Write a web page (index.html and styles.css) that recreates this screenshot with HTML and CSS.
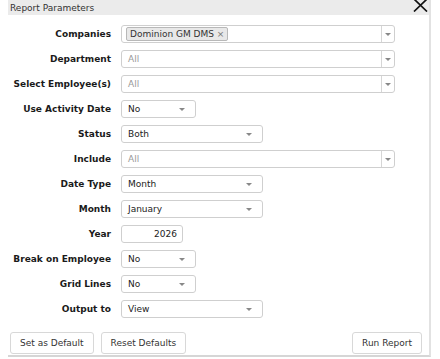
FILE: index.html
```html
<!DOCTYPE html>
<html lang="en">
<head>
    <meta charset="UTF-8">
    <title>Report Parameters</title>
    <link rel="stylesheet" href="styles.css">
</head>
<body>
    <div class="dialog">
        <div class="header">
            <span>Report Parameters</span>
            <svg class="close" width="15" height="13" viewBox="0 0 15 13">
                <path d="M1 0 L14 12.5 M14 0 L1 12.5" stroke="#111" stroke-width="1.7" fill="none"/>
            </svg>
        </div>

        <div class="form">
            <div class="row">
                <label>Companies</label>
                <div class="field wide multi">
                    <span class="tag">Dominion GM DMS <b>&times;</b></span>
                    <span class="arrow-box"><i class="arrow"></i></span>
                </div>
            </div>
            <div class="row">
                <label>Department</label>
                <div class="field wide multi">
                    <span class="placeholder">All</span>
                    <span class="arrow-box"><i class="arrow"></i></span>
                </div>
            </div>
            <div class="row">
                <label>Select Employee(s)</label>
                <div class="field wide multi">
                    <span class="placeholder">All</span>
                    <span class="arrow-box"><i class="arrow"></i></span>
                </div>
            </div>
            <div class="row">
                <label>Use Activity Date</label>
                <div class="field short"><span>No</span><i class="arrow"></i></div>
            </div>
            <div class="row">
                <label>Status</label>
                <div class="field medium"><span>Both</span><i class="arrow"></i></div>
            </div>
            <div class="row">
                <label>Include</label>
                <div class="field wide multi">
                    <span class="placeholder">All</span>
                    <span class="arrow-box"><i class="arrow"></i></span>
                </div>
            </div>
            <div class="row">
                <label>Date Type</label>
                <div class="field medium"><span>Month</span><i class="arrow"></i></div>
            </div>
            <div class="row">
                <label>Month</label>
                <div class="field medium"><span>January</span><i class="arrow"></i></div>
            </div>
            <div class="row">
                <label>Year</label>
                <div class="field year">2026</div>
            </div>
            <div class="row">
                <label>Break on Employee</label>
                <div class="field short"><span>No</span><i class="arrow"></i></div>
            </div>
            <div class="row">
                <label>Grid Lines</label>
                <div class="field short"><span>No</span><i class="arrow"></i></div>
            </div>
            <div class="row">
                <label>Output to</label>
                <div class="field medium"><span>View</span><i class="arrow"></i></div>
            </div>
        </div>

        <div class="footer">
            <button>Set as Default</button>
            <button>Reset Defaults</button>
            <button class="run">Run Report</button>
        </div>
    </div>
</body>
</html>
```

FILE: styles.css
```css
body {
    margin: 0;
    background: #fff;
    font-family: "DejaVu Sans", Verdana, sans-serif;
    font-size: 9px;
    color: #222;
}
.dialog {
    margin-left: 8px;
    width: 421px;
    border-right: 2px solid #e2e2e2;
    border-bottom: 2px solid #d6d6d6;
    padding-bottom: 1px;
}
.header {
    height: 15px;
    background: #ebebeb;
    display: flex;
    justify-content: space-between;
    align-items: center;
    padding: 0 1px 0 2px;
    color: #333;
}
.close {
    align-self: flex-start;
    margin-top: -1px;
}
.form {
    padding-top: 10px;
}
.row {
    display: flex;
    align-items: center;
    margin-bottom: 7px;
}
.row label {
    width: 103px;
    margin-right: 10px;
    text-align: right;
    font-weight: bold;
    color: #1a1a1a;
    white-space: nowrap;
}
.field {
    height: 18px;
    box-sizing: border-box;
    border: 1px solid #cfcfcf;
    border-radius: 3px;
    display: flex;
    align-items: center;
    padding: 0 6px;
}
.wide {
    width: 274px;
}
.medium {
    width: 142px;
}
.short {
    width: 75px;
}
.year {
    width: 62px;
    justify-content: flex-end;
    padding-right: 5px;
}
.medium, .short {
    justify-content: space-between;
    padding-right: 10px;
}
.multi {
    padding: 0 0 0 4px;
}
.placeholder {
    color: #999;
    flex: 1;
    padding-left: 2px;
}
.tag {
    background: #e8e8e8;
    border: 1px solid #b8b8b8;
    border-radius: 2px;
    padding: 0 3px;
    height: 12px;
    line-height: 12px;
    color: #333;
    margin-right: auto;
}
.tag b {
    font-weight: normal;
    color: #777;
}
.arrow-box {
    width: 12px;
    height: 16px;
    border-left: 1px solid #d6d6d6;
    display: flex;
    align-items: center;
    justify-content: center;
}
.arrow {
    width: 0;
    height: 0;
    border-left: 3px solid transparent;
    border-right: 3px solid transparent;
    border-top: 3px solid #888;
}
.footer {
    display: flex;
    gap: 7px;
    padding: 7px 7px 0 2px;
}
.footer button {
    font-family: inherit;
    font-size: 9px;
    color: #333;
    background: #fff;
    border: 1px solid #d8d8d8;
    border-radius: 3px;
    height: 22px;
    padding: 0 9px;
}
.footer .run {
    margin-left: auto;
}
```
